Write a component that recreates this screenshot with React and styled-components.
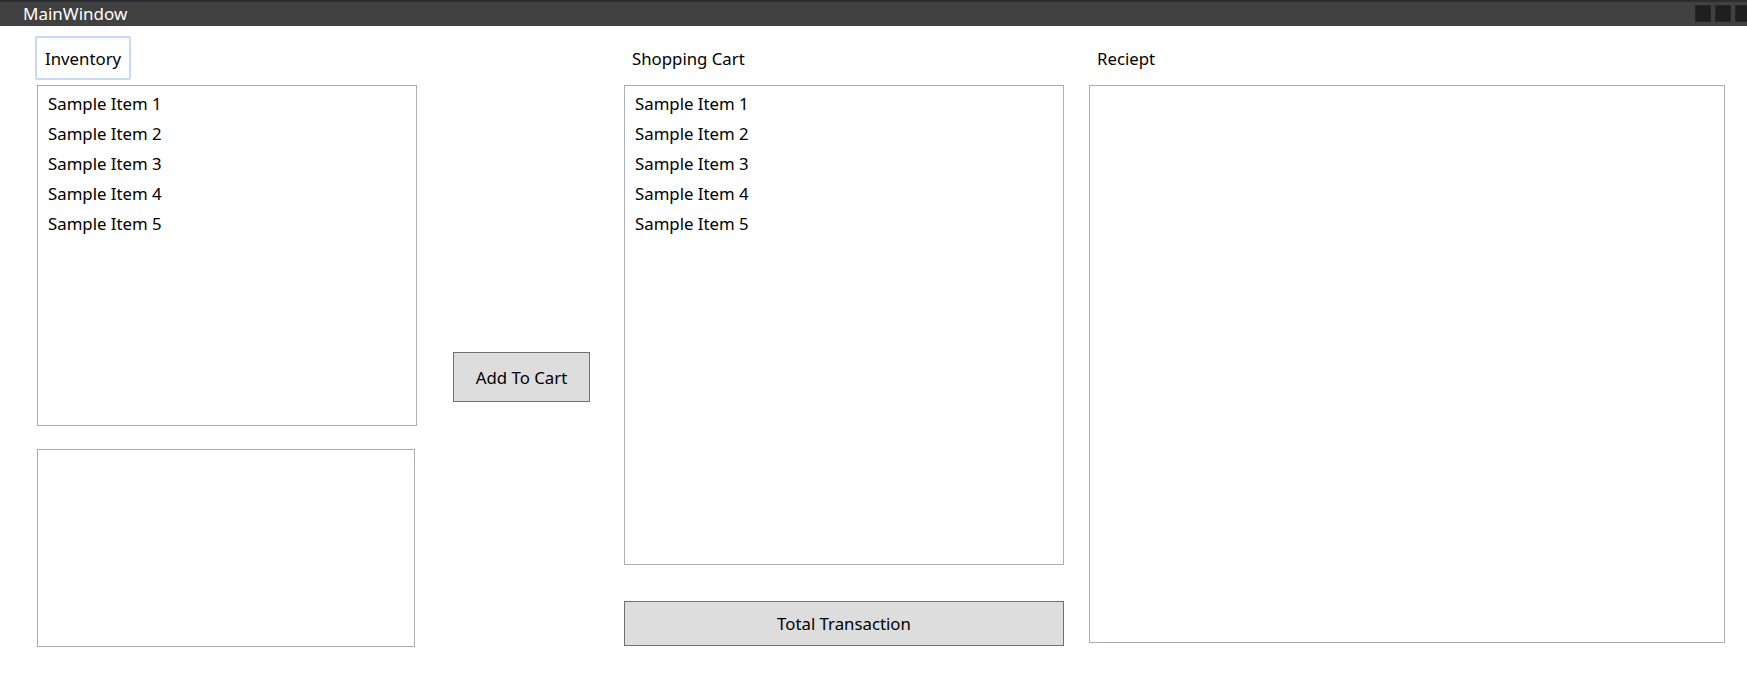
import styled, { createGlobalStyle } from "styled-components"

const GlobalStyle = createGlobalStyle`
  html, body {
    margin: 0;
    padding: 0;
    background: #ffffff;
  }
  body {
    font-family: "Noto Sans", "Open Sans", sans-serif;
    color: #000000;
  }
`

const Window = styled.div`
  width: 1747px;
  height: 673px;
  display: flex;
  flex-direction: column;
  overflow: hidden;
  background: #ffffff;
`
const TitleBar = styled.div`
  height: 24px;
  border-top: 2px solid #2a2c33;
  background: #414141;
  display: flex;
  align-items: center;
  justify-content: space-between;
  padding-left: 23px;
`
const Title = styled.span`
  color: #ffffff;
  font-size: 17px;
  line-height: 24px;
`
const Controls = styled.div`
  display: flex;
  gap: 4px;
  align-self: flex-start;
  margin-top: 3px;
  margin-right: -4px;
`
const CtrlBox = styled.div`
  width: 16px;
  height: 17px;
  background: #1f1f1f;
  box-shadow: inset 0 0 0 1px #262626;
`
const Content = styled.div`
  flex: 1;
  display: flex;
  align-items: flex-start;
  padding: 10px 0 0 37px;
`
const Column = styled.div`
  width: ${p => p.$w}px;
  margin-left: ${p => p.$ml || 0}px;
  padding-top: ${p => p.$pt || 0}px;
  display: flex;
  flex-direction: column;
`
const Label = styled.div`
  height: 44px;
  box-sizing: border-box;
  display: flex;
  align-items: center;
  padding: 0 8px 0 ${p => (p.$focused ? 8 : 6)}px;
  font-size: 16.8px;
  margin-bottom: 5px;
  align-self: flex-start;
  border: 2px solid ${p => (p.$focused ? "#c9daf8" : "transparent")};
  border-radius: 2px;
  margin-left: ${p => (p.$focused ? -2 : 0)}px;
`
const ListBox = styled.div`
  box-sizing: border-box;
  height: ${p => p.$h}px;
  width: ${p => (p.$w ? `${p.$w}px` : "100%")};
  border: 1px solid #abadb3;
  background: #ffffff;
  padding-top: 2.5px;
  margin-top: ${p => p.$mt || 0}px;
`
const Item = styled.div`
  height: 30px;
  line-height: 30px;
  padding-left: 10px;
  font-size: 16.8px;
  white-space: nowrap;
`
const Button = styled.button`
  box-sizing: border-box;
  width: 100%;
  height: ${p => p.$h}px;
  margin-top: ${p => p.$mt || 0}px;
  background: #dddddd;
  border: 1px solid #707070;
  border-radius: 0;
  font-family: "Noto Sans", "Open Sans", sans-serif;
  font-size: 16.8px;
  color: #000000;
  padding: 0;
`

const items = ["Sample Item 1", "Sample Item 2", "Sample Item 3", "Sample Item 4", "Sample Item 5"]

const App = () => {
  return (
    <Window>
      <GlobalStyle />
      <TitleBar>
        <Title>MainWindow</Title>
        <Controls>
          <CtrlBox />
          <CtrlBox />
          <CtrlBox />
        </Controls>
      </TitleBar>
      <Content>
        <Column $w={380}>
          <Label $focused>Inventory</Label>
          <ListBox $h={341}>
            {items.map(i => <Item key={i}>{i}</Item>)}
          </ListBox>
          <ListBox $h={198} $w={378} $mt={23} />
        </Column>
        <Column $w={137} $ml={36} $pt={316}>
          <Button $h={50}>Add To Cart</Button>
        </Column>
        <Column $w={440} $ml={34}>
          <Label>Shopping Cart</Label>
          <ListBox $h={480}>
            {items.map(i => <Item key={i}>{i}</Item>)}
          </ListBox>
          <Button $h={45} $mt={36}>Total Transaction</Button>
        </Column>
        <Column $w={636} $ml={25}>
          <Label>Reciept</Label>
          <ListBox $h={558} />
        </Column>
      </Content>
    </Window>
  )
}

export default App
